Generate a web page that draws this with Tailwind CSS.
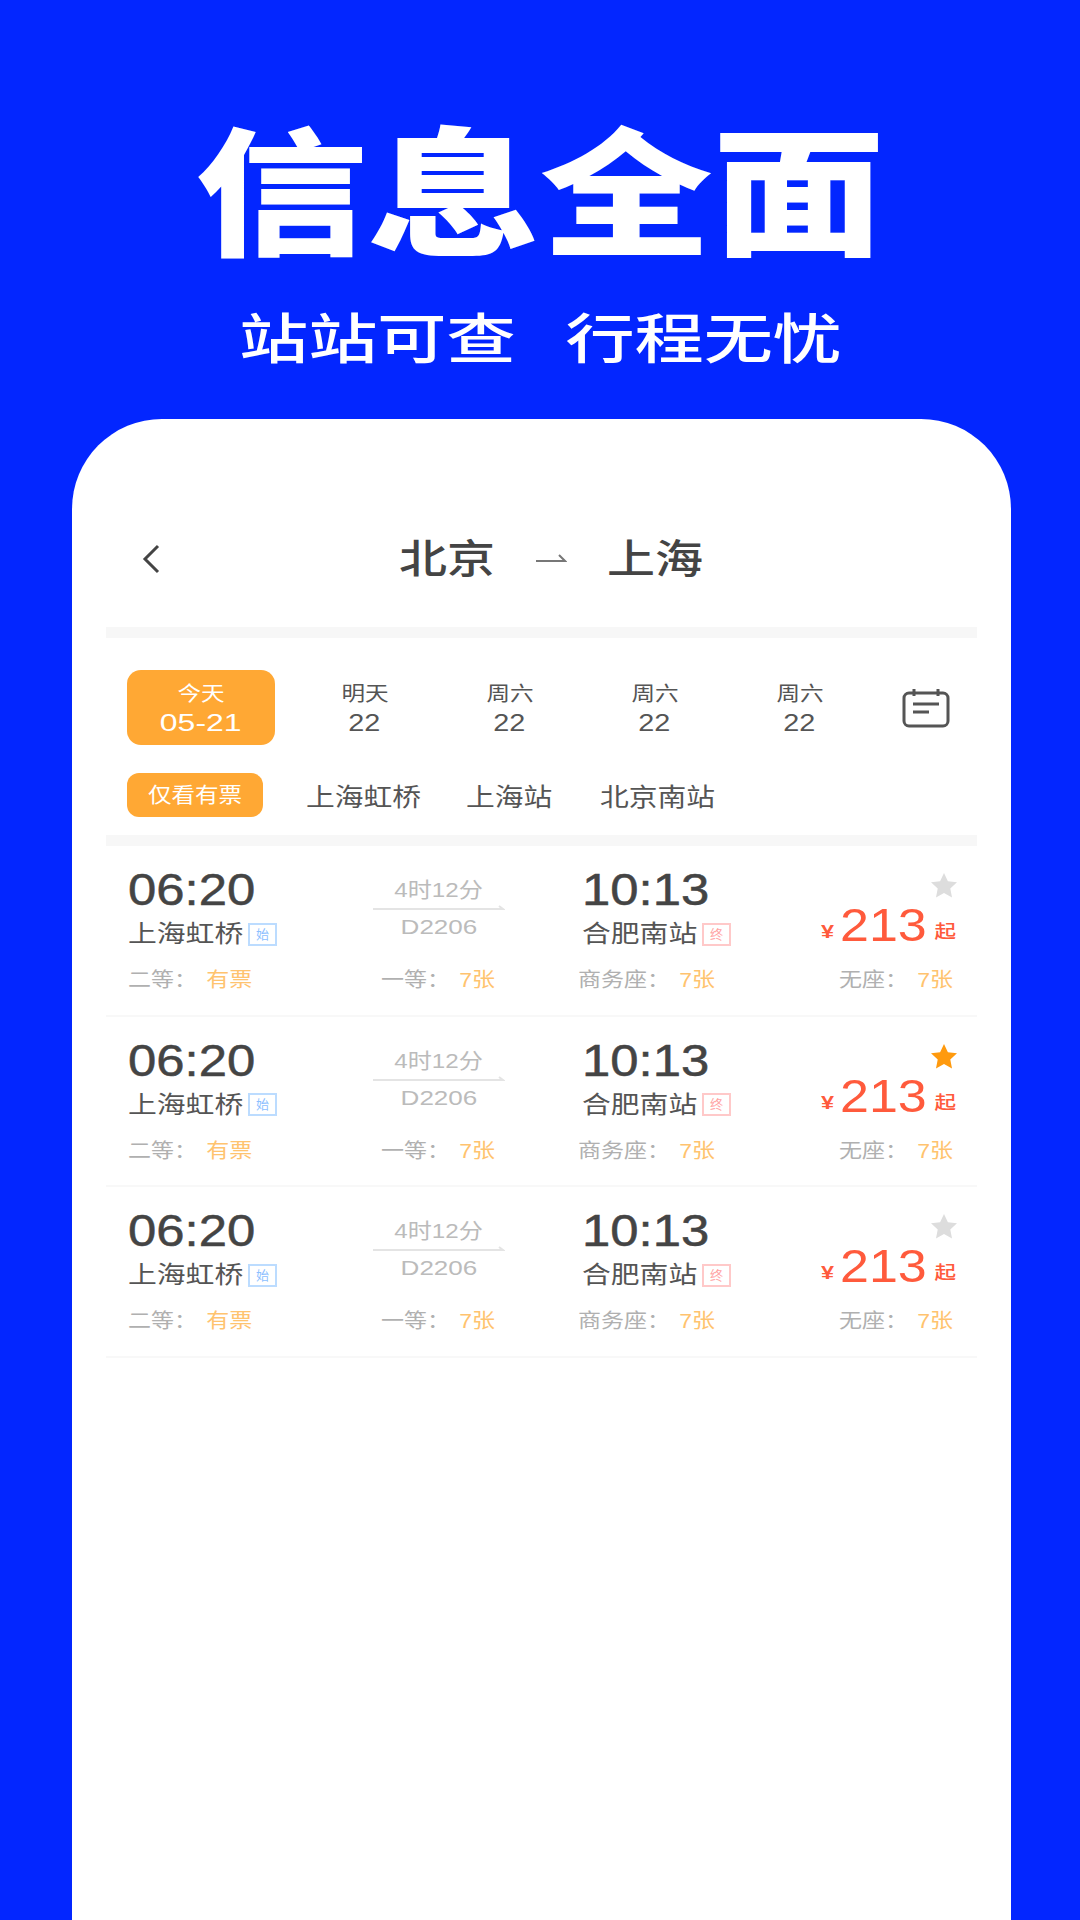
<!DOCTYPE html>
<html lang="zh-CN">
<head>
    <meta charset="UTF-8">
    <meta name="viewport" content="width=device-width, initial-scale=1.0">
    <title>信息全面</title>
    <script src="https://cdn.jsdelivr.net/npm/@tailwindcss/browser@4"></script>
</head>
<body class="m-0 bg-[#0326ff] font-['Liberation_Sans','Noto_Sans_CJK_SC',sans-serif]">
<div class="w-[1080px] h-[1920px] overflow-hidden flex flex-col blur-[0.6px]">
    <div class="h-[419px] w-full flex flex-col items-center text-white font-['Noto_Sans_CJK_SC',sans-serif]">
        <h1 class="mt-[89px] h-[190px] leading-[190px] text-[138px] font-black whitespace-nowrap scale-x-[1.25]">信息全面</h1>
        <p class="mt-[22px] h-[70px] leading-[70px] text-[54px] font-medium whitespace-nowrap scale-x-[1.28]">站站可查<span class="inline-block w-[39px]"></span>行程无忧</p>
    </div>

    <div class="ml-[72px] w-[939px] flex-1 bg-white rounded-t-[90px] px-[34px] text-[#444]">
        <!-- header -->
        <div class="h-[208px] pt-[112px] relative">
            <div class="h-[56px] pl-[19px] flex items-center justify-center">
                <span class="w-[80px] text-[40px] font-medium leading-none whitespace-nowrap scale-x-[1.2]">北京</span>
                <svg class="mx-[48px]" width="32" height="14" viewBox="0 0 32 14" fill="none" stroke="#777" stroke-width="2"><path d="M1 9h29l-6-6"/></svg>
                <span class="w-[80px] text-[40px] font-medium leading-none whitespace-nowrap scale-x-[1.2]">上海</span>
            </div>
            <svg class="absolute left-[34px] top-[124px]" width="22" height="32" viewBox="0 0 22 32" fill="none" stroke="#444" stroke-width="3"><path d="M18 3 5 16l13 13"/></svg>
        </div>
        <div class="h-[11px] bg-[#f7f7f7]"></div>

        <!-- dates -->
        <div class="h-[135px] pl-[21px] pt-[32px] flex items-start">
            <div class="w-[148px] h-[75px] bg-[#ffa834] rounded-[14px] flex flex-col items-center justify-center text-white shrink-0">
                <span class="text-[20px] leading-[30px] scale-x-[1.18]">今天</span>
                <span class="text-[24px] leading-[28px] scale-x-[1.33]">05-21</span>
            </div>
            <div class="ml-[17px] w-[145px] h-[75px] flex flex-col items-center justify-center shrink-0 text-[#555]">
                <span class="text-[20px] leading-[30px] scale-x-[1.18]">明天</span>
                <span class="text-[24px] leading-[28px] scale-x-[1.2]">22</span>
            </div>
            <div class="w-[145px] h-[75px] flex flex-col items-center justify-center shrink-0 text-[#555]">
                <span class="text-[20px] leading-[30px] scale-x-[1.18]">周六</span>
                <span class="text-[24px] leading-[28px] scale-x-[1.2]">22</span>
            </div>
            <div class="w-[145px] h-[75px] flex flex-col items-center justify-center shrink-0 text-[#555]">
                <span class="text-[20px] leading-[30px] scale-x-[1.18]">周六</span>
                <span class="text-[24px] leading-[28px] scale-x-[1.2]">22</span>
            </div>
            <div class="w-[145px] h-[75px] flex flex-col items-center justify-center shrink-0 text-[#555]">
                <span class="text-[20px] leading-[30px] scale-x-[1.18]">周六</span>
                <span class="text-[24px] leading-[28px] scale-x-[1.2]">22</span>
            </div>
            <svg class="ml-[30px] mt-[18px] shrink-0" width="48" height="40" viewBox="0 0 48 40" fill="none" stroke="#555" stroke-width="3"><rect x="2" y="5" width="44" height="33" rx="5"/><path d="M12 1v7M36 1v7"/><path d="M11 16h26M11 24h16"/></svg>
        </div>

        <!-- filters -->
        <div class="h-[62px] pl-[21px] flex items-start text-[25px] text-[#555]">
            <span class="w-[136px] h-[44px] bg-[#ffa834] rounded-[12px] text-white text-[21px] leading-[44px] text-center whitespace-nowrap"><span class="inline-block scale-x-[1.12]">仅看有票</span></span>
            <span class="ml-[43px] w-[160px] leading-[48px] whitespace-nowrap origin-left scale-x-[1.15]">上海虹桥</span>
            <span class="w-[134px] leading-[48px] whitespace-nowrap origin-left scale-x-[1.15]">上海站</span>
            <span class="leading-[48px] whitespace-nowrap origin-left scale-x-[1.15]">北京南站</span>
        </div>
        <div class="h-[11px] bg-[#f7f7f7]"></div>

        <!-- row 1 -->
        <div class="h-[170.5px] pl-[22px] pr-[21px] border-b-2 border-[#f8f8f8]">
            <div class="h-[120px] pt-[22px] flex">
                <div class="w-[245px] shrink-0">
                    <div class="text-[45px] leading-[44px] origin-left scale-x-[1.13] [-webkit-text-stroke:0.5px_#444]">06:20</div>
                    <div class="mt-[5px] h-[34px] flex items-center"><span class="w-[120px] text-[24px] text-[#555] whitespace-nowrap origin-left scale-x-[1.2]">上海虹桥</span><span class="w-[29px] h-[23px] border-2 border-[#bcdcff] text-[#8cc0ff] text-[13px] leading-[19px] text-center">始</span></div>
                </div>
                <div class="w-[132px] shrink-0 flex flex-col items-center text-[#bbb] text-[21px]">
                    <span class="mt-[9px] leading-[26px] whitespace-nowrap scale-x-[1.15]">4时12分</span>
                    <svg class="mt-[2px]" width="132" height="6" viewBox="0 0 132 6" fill="none" stroke="#e4e4e4" stroke-width="2"><path d="M0 4h130l-4-3"/></svg>
                    <span class="mt-[3px] leading-[26px] scale-x-[1.24]">D2206</span>
                </div>
                <div class="ml-[77px] w-[200px] shrink-0">
                    <div class="text-[45px] leading-[44px] origin-left scale-x-[1.13] [-webkit-text-stroke:0.5px_#444]">10:13</div>
                    <div class="mt-[5px] h-[34px] flex items-center"><span class="w-[120px] text-[24px] text-[#555] whitespace-nowrap origin-left scale-x-[1.2]">合肥南站</span><span class="w-[29px] h-[23px] border-2 border-[#ffc9c9] text-[#ffa3a3] text-[13px] leading-[19px] text-center">终</span></div>
                </div>
                <div class="flex-1 flex flex-col items-end">
                    <svg class="mr-[-1px] mt-[5px]" width="26" height="25" viewBox="0 0 24 23" fill="#ddd"><path d="m12 0 3.6 7.6 8.4 1-6.2 5.700 1.600 8.200L12 18.400l-7.400 4.100 1.600-8.200L0 8.600l8.400-1z"/></svg>
                    <div class="mt-[5px] flex items-end text-[#ff5a3c] h-[44px] whitespace-nowrap">
                        <span class="text-[18px] leading-[30px] mr-[6px] font-bold origin-right scale-x-[1.3]">¥</span><span class="text-[46px] leading-[44px] w-[98px] origin-left scale-x-[1.13]">213</span><span class="text-[18px] leading-[30px] font-medium origin-right scale-x-[1.2]">起</span>
                    </div>
                </div>
            </div>
            <div class="grid grid-cols-[253px_197px_261px_auto] text-[20px] leading-[28px] text-[#b0b0b0]">
                <div><span class="inline-block whitespace-nowrap origin-left scale-x-[1.15]">二等：<span class="ml-[8px] text-[#ffc36f]">有票</span></span></div>
                <div><span class="inline-block whitespace-nowrap origin-left scale-x-[1.15]">一等：<span class="ml-[8px] text-[#ffc36f]">7张</span></span></div>
                <div><span class="inline-block whitespace-nowrap origin-left scale-x-[1.15]">商务座：<span class="ml-[8px] text-[#ffc36f]">7张</span></span></div>
                <div><span class="inline-block whitespace-nowrap origin-left scale-x-[1.15]">无座：<span class="ml-[8px] text-[#ffc36f]">7张</span></span></div>
            </div>
        </div>

        <!-- row 2 -->
        <div class="h-[170.5px] pl-[22px] pr-[21px] border-b-2 border-[#f8f8f8]">
            <div class="h-[120px] pt-[22px] flex">
                <div class="w-[245px] shrink-0">
                    <div class="text-[45px] leading-[44px] origin-left scale-x-[1.13] [-webkit-text-stroke:0.5px_#444]">06:20</div>
                    <div class="mt-[5px] h-[34px] flex items-center"><span class="w-[120px] text-[24px] text-[#555] whitespace-nowrap origin-left scale-x-[1.2]">上海虹桥</span><span class="w-[29px] h-[23px] border-2 border-[#bcdcff] text-[#8cc0ff] text-[13px] leading-[19px] text-center">始</span></div>
                </div>
                <div class="w-[132px] shrink-0 flex flex-col items-center text-[#bbb] text-[21px]">
                    <span class="mt-[9px] leading-[26px] whitespace-nowrap scale-x-[1.15]">4时12分</span>
                    <svg class="mt-[2px]" width="132" height="6" viewBox="0 0 132 6" fill="none" stroke="#e4e4e4" stroke-width="2"><path d="M0 4h130l-4-3"/></svg>
                    <span class="mt-[3px] leading-[26px] scale-x-[1.24]">D2206</span>
                </div>
                <div class="ml-[77px] w-[200px] shrink-0">
                    <div class="text-[45px] leading-[44px] origin-left scale-x-[1.13] [-webkit-text-stroke:0.5px_#444]">10:13</div>
                    <div class="mt-[5px] h-[34px] flex items-center"><span class="w-[120px] text-[24px] text-[#555] whitespace-nowrap origin-left scale-x-[1.2]">合肥南站</span><span class="w-[29px] h-[23px] border-2 border-[#ffc9c9] text-[#ffa3a3] text-[13px] leading-[19px] text-center">终</span></div>
                </div>
                <div class="flex-1 flex flex-col items-end">
                    <svg class="mr-[-1px] mt-[5px]" width="26" height="25" viewBox="0 0 24 23" fill="#ff9a0e"><path d="m12 0 3.6 7.6 8.4 1-6.2 5.700 1.600 8.200L12 18.400l-7.400 4.100 1.600-8.200L0 8.600l8.400-1z"/></svg>
                    <div class="mt-[5px] flex items-end text-[#ff5a3c] h-[44px] whitespace-nowrap">
                        <span class="text-[18px] leading-[30px] mr-[6px] font-bold origin-right scale-x-[1.3]">¥</span><span class="text-[46px] leading-[44px] w-[98px] origin-left scale-x-[1.13]">213</span><span class="text-[18px] leading-[30px] font-medium origin-right scale-x-[1.2]">起</span>
                    </div>
                </div>
            </div>
            <div class="grid grid-cols-[253px_197px_261px_auto] text-[20px] leading-[28px] text-[#b0b0b0]">
                <div><span class="inline-block whitespace-nowrap origin-left scale-x-[1.15]">二等：<span class="ml-[8px] text-[#ffc36f]">有票</span></span></div>
                <div><span class="inline-block whitespace-nowrap origin-left scale-x-[1.15]">一等：<span class="ml-[8px] text-[#ffc36f]">7张</span></span></div>
                <div><span class="inline-block whitespace-nowrap origin-left scale-x-[1.15]">商务座：<span class="ml-[8px] text-[#ffc36f]">7张</span></span></div>
                <div><span class="inline-block whitespace-nowrap origin-left scale-x-[1.15]">无座：<span class="ml-[8px] text-[#ffc36f]">7张</span></span></div>
            </div>
        </div>

        <!-- row 3 -->
        <div class="h-[170.5px] pl-[22px] pr-[21px] border-b-2 border-[#f8f8f8]">
            <div class="h-[120px] pt-[22px] flex">
                <div class="w-[245px] shrink-0">
                    <div class="text-[45px] leading-[44px] origin-left scale-x-[1.13] [-webkit-text-stroke:0.5px_#444]">06:20</div>
                    <div class="mt-[5px] h-[34px] flex items-center"><span class="w-[120px] text-[24px] text-[#555] whitespace-nowrap origin-left scale-x-[1.2]">上海虹桥</span><span class="w-[29px] h-[23px] border-2 border-[#bcdcff] text-[#8cc0ff] text-[13px] leading-[19px] text-center">始</span></div>
                </div>
                <div class="w-[132px] shrink-0 flex flex-col items-center text-[#bbb] text-[21px]">
                    <span class="mt-[9px] leading-[26px] whitespace-nowrap scale-x-[1.15]">4时12分</span>
                    <svg class="mt-[2px]" width="132" height="6" viewBox="0 0 132 6" fill="none" stroke="#e4e4e4" stroke-width="2"><path d="M0 4h130l-4-3"/></svg>
                    <span class="mt-[3px] leading-[26px] scale-x-[1.24]">D2206</span>
                </div>
                <div class="ml-[77px] w-[200px] shrink-0">
                    <div class="text-[45px] leading-[44px] origin-left scale-x-[1.13] [-webkit-text-stroke:0.5px_#444]">10:13</div>
                    <div class="mt-[5px] h-[34px] flex items-center"><span class="w-[120px] text-[24px] text-[#555] whitespace-nowrap origin-left scale-x-[1.2]">合肥南站</span><span class="w-[29px] h-[23px] border-2 border-[#ffc9c9] text-[#ffa3a3] text-[13px] leading-[19px] text-center">终</span></div>
                </div>
                <div class="flex-1 flex flex-col items-end">
                    <svg class="mr-[-1px] mt-[5px]" width="26" height="25" viewBox="0 0 24 23" fill="#ddd"><path d="m12 0 3.6 7.6 8.4 1-6.2 5.700 1.600 8.200L12 18.400l-7.400 4.100 1.600-8.200L0 8.600l8.400-1z"/></svg>
                    <div class="mt-[5px] flex items-end text-[#ff5a3c] h-[44px] whitespace-nowrap">
                        <span class="text-[18px] leading-[30px] mr-[6px] font-bold origin-right scale-x-[1.3]">¥</span><span class="text-[46px] leading-[44px] w-[98px] origin-left scale-x-[1.13]">213</span><span class="text-[18px] leading-[30px] font-medium origin-right scale-x-[1.2]">起</span>
                    </div>
                </div>
            </div>
            <div class="grid grid-cols-[253px_197px_261px_auto] text-[20px] leading-[28px] text-[#b0b0b0]">
                <div><span class="inline-block whitespace-nowrap origin-left scale-x-[1.15]">二等：<span class="ml-[8px] text-[#ffc36f]">有票</span></span></div>
                <div><span class="inline-block whitespace-nowrap origin-left scale-x-[1.15]">一等：<span class="ml-[8px] text-[#ffc36f]">7张</span></span></div>
                <div><span class="inline-block whitespace-nowrap origin-left scale-x-[1.15]">商务座：<span class="ml-[8px] text-[#ffc36f]">7张</span></span></div>
                <div><span class="inline-block whitespace-nowrap origin-left scale-x-[1.15]">无座：<span class="ml-[8px] text-[#ffc36f]">7张</span></span></div>
            </div>
        </div>
    </div>
</div>
</body>
</html>
